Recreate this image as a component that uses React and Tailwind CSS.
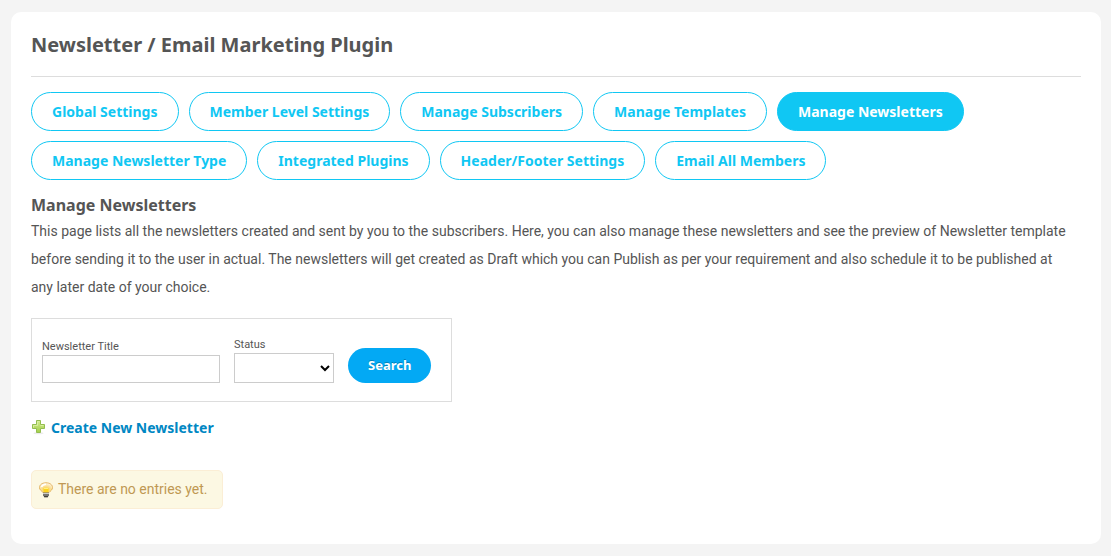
import { useState } from 'react';

const tabs = [
  'Global Settings',
  'Member Level Settings',
  'Manage Subscribers',
  'Manage Templates',
  'Manage Newsletters',
  'Manage Newsletter Type',
  'Integrated Plugins',
  'Header/Footer Settings',
  'Email All Members',
];

function PlusIcon() {
  return (
    <svg width="16" height="16" viewBox="0 0 16 16" aria-hidden="true">
      <defs>
        <linearGradient id="plus-fill" x1="0" y1="0" x2="0" y2="1">
          <stop offset="0" stopColor="#d3ec8f" />
          <stop offset="1" stopColor="#a3cf4a" />
        </linearGradient>
      </defs>
      <ellipse cx="7.5" cy="13.3" rx="5" ry="1" fill="#ececec" />
      <path
        d="M5.500.5h4v4h4v4h-4v4h-4v-4h-4v-4h4z"
        fill="url(#plus-fill)"
        stroke="#93bd50"
        strokeLinejoin="round"
      />
      <path d="M6.500 5.500v-4h2M2.500 7.500v-2h4M9.500 5.500h3" fill="none" stroke="#d8efa0" />
    </svg>
  );
}

function BulbIcon() {
  return (
    <svg width="16" height="16" viewBox="0 0 16 16" aria-hidden="true">
      <defs>
        <radialGradient id="bulb-fill" cx="0.5" cy="0.7" r="0.65">
          <stop offset="0" stopColor="#ffe02a" />
          <stop offset="0.4" stopColor="#fbd97a" />
          <stop offset="1" stopColor="#fdf3e0" />
        </radialGradient>
      </defs>
      <path
        d="M8 .8C4 .8 1.500 2.900 1.500 5.500c0 2.400 2 3.300 3.500 5h6c1.500-1.700 3.500-2.600 3.500-5C14.500 2.900 12 .8 8 .8z"
        fill="url(#bulb-fill)"
        stroke="#e3b35f"
      />
      <path d="M5.500 6.500h5v4h-5z" fill="#fbd21f" />
      <path d="M6 6.500h4" stroke="#fff27a" />
      <path d="M3.500 5Q4.500 2.500 8 2.300" fill="none" stroke="#ffffff" strokeWidth="1.500" />
      <path d="M5 10.500h6v3l-1.500 1.700h-3L5 13.500z" fill="#77746f" />
      <path d="M5 11.500h6" stroke="#c9c9c9" />
      <path d="M6 14.700h4" stroke="#333333" />
    </svg>
  );
}

export default function App() {
  const [activeTab, setActiveTab] = useState('Manage Newsletters');
  const [title, setTitle] = useState('');
  const [status, setStatus] = useState('');

  return (
    <div className="min-h-screen bg-[#f4f4f4] py-3 pr-[10px] pl-[11px] font-[Roboto,sans-serif] text-sm text-[#555]">
      <main className="rounded-[10px] bg-white px-5 pt-5 pb-[35px]">
        <h1 className="border-b border-[#ddd] pb-[19px] font-['Noto_Sans',sans-serif] text-xl leading-[25px] font-bold">
          Newsletter / Email Marketing Plugin
        </h1>

        <nav className="mt-[15px] flex flex-wrap gap-[10px] font-['Noto_Sans',sans-serif]">
          {tabs.map((tab) => (
            <a
              key={tab}
              href="#"
              onClick={() => setActiveTab(tab)}
              className={`rounded-[20px] border border-[#10c7f3] px-5 py-2 leading-[21px] font-bold ${
                tab === activeTab ? 'bg-[#10c7f3] text-white' : 'text-[#10c7f3]'
              }`}
            >
              {tab}
            </a>
          ))}
        </nav>

        <h2 className="mt-[14px] font-['Noto_Sans',sans-serif] text-base leading-[23px] font-bold">
          Manage Newsletters
        </h2>
        <p className="pr-2 leading-7">
          This page lists all the newsletters created and sent by you to the subscribers. Here, you can also
          manage these newsletters and see the preview of Newsletter template before sending it to the user in
          actual. The newsletters will get created as Draft which you can Publish as per your requirement and
          also schedule it to be published at any later date of your choice.
        </p>

        {/* Search filters */}
        <form
          onSubmit={(e) => e.preventDefault()}
          className="mt-[17px] inline-flex flex-wrap items-end gap-[14px] border border-[#ddd] pt-[18px] pr-5 pb-[18px] pl-[10px]"
        >
          <div className="flex flex-col">
            <label htmlFor="title" className="text-[11px] leading-4">Newsletter Title</label>
            <input
              id="title"
              type="text"
              value={title}
              onChange={(e) => setTitle(e.target.value)}
              className="h-7 w-[178px] border border-[#ccc] px-1"
            />
          </div>
          <div className="flex flex-col">
            <label htmlFor="status" className="text-[11px] leading-4">Status</label>
            <select
              id="status"
              value={status}
              onChange={(e) => setStatus(e.target.value)}
              className="h-[30px] w-[100px] border border-[#ccc] bg-white text-black"
            >
              <option value=""></option>
              <option value="draft">Draft</option>
              <option value="published">Published</option>
            </select>
          </div>
          <button
            type="submit"
            className="h-[35px] rounded-full bg-[#03a9f4] px-5 font-['Noto_Sans',sans-serif] text-[13px] font-bold text-white text-shadow-[0_-1px_0_rgba(0,0,0,0.25)]"
          >
            Search
          </button>
        </form>

        <div className="mt-[15px] flex font-['Noto_Sans',sans-serif]">
          <a href="#" className="flex items-center gap-1 leading-[22px] font-bold text-[#0087c3]">
            <PlusIcon />
            Create New Newsletter
          </a>
        </div>

        <div className="mt-[31px] flex">
          <div className="flex items-center gap-1 rounded-[5px] border border-[#fbeed5] bg-[#fcf8e3] py-2 pr-[14px] pl-[6px] leading-[21px] text-[#c09853]">
            <BulbIcon />
            There are no entries yet.
          </div>
        </div>
      </main>
    </div>
  );
}
